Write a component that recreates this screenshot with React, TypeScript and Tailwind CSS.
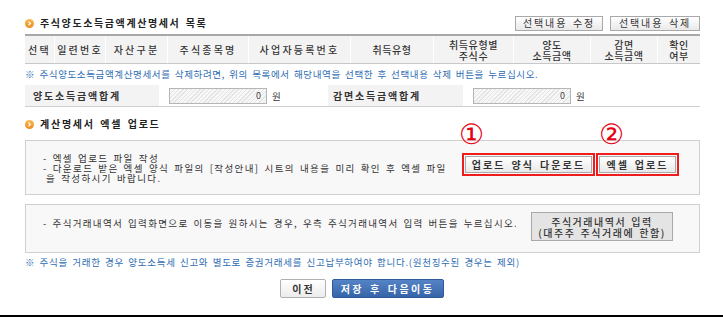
import React from "react";

const font = "font-['Noto_Sans_CJK_KR','Noto_Sans',sans-serif]";

function Bullet() {
  return (
    <svg width="9" height="9" viewBox="0 0 9 9" className="flex-none">
      <defs>
        <linearGradient id="og" x1="0" y1="0" x2="0" y2="1">
          <stop offset="0" stopColor="#fbb955" />
          <stop offset="1" stopColor="#ee8a16" />
        </linearGradient>
      </defs>
      <circle cx="4.5" cy="4.5" r="4.5" fill="url(#og)" />
      <polyline points="3.5,2.6 5.4,4.5 3.5,6.4" fill="none" stroke="#fff" strokeWidth="1.3" />
    </svg>
  );
}

const cols: { w: number; label: string[]; wide: boolean }[] = [
  { w: 29, label: ["선택"], wide: true },
  { w: 51, label: ["일련번호"], wide: true },
  { w: 62, label: ["자산구분"], wide: true },
  { w: 81, label: ["주식종목명"], wide: true },
  { w: 102, label: ["사업자등록번호"], wide: true },
  { w: 83, label: ["취득유형"], wide: false },
  { w: 80, label: ["취득유형별", "주식수"], wide: false },
  { w: 77, label: ["양도", "소득금액"], wide: false },
  { w: 67, label: ["감면", "소득금액"], wide: false },
  { w: 43, label: ["확인", "여부"], wide: false },
];

function GrayBtn({ children, className = "" }: { children: React.ReactNode; className?: string }) {
  return (
    <div
      className={`flex items-center justify-center border border-[#a9a9a9] bg-gradient-to-b from-[#ffffff] to-[#e9e9e9] text-[#333] ${className}`}
    >
      {children}
    </div>
  );
}

function SumInput() {
  return (
    <div className="w-[98px] h-[16px] border border-[#b5b5b5] bg-[repeating-linear-gradient(135deg,#e4e4e4_0px,#e4e4e4_1px,#f7f7f7_1px,#f7f7f7_3px)] flex items-center justify-end pr-[5px] text-[9px] text-[#444]">
      0
    </div>
  );
}

export default function App() {
  return (
    <div className={`relative w-[723px] h-[317px] bg-white overflow-hidden ${font} text-[9.5px] text-[#333] leading-[10px] [word-spacing:1.5px]`}>
      <div className="pl-[25px] w-[700px] pt-[15px]">
        {/* Title row */}
        <div className="flex items-center h-[16px]">
          <Bullet />
          <div className="ml-[6px] font-bold text-[10px] tracking-[1.6px] text-[#222]">주식양도소득금액계산명세서 목록</div>
          <div className="ml-auto flex gap-[7px]">
            <GrayBtn className="w-[88px] h-[15px] text-[10px] tracking-[1.9px]">선택내용 수정</GrayBtn>
            <GrayBtn className="w-[90px] h-[15px] text-[10px] tracking-[1.9px]">선택내용 삭제</GrayBtn>
          </div>
        </div>

        {/* Table header */}
        <div className="mt-[3px] flex h-[30px] bg-[#f3f3f3] border-t-2 border-t-[#a8a8a8] border-b border-b-[#c8c8c8]">
          {cols.map((c, i) => (
            <div
              key={i}
              style={{ width: c.w }}
              className={`flex flex-col items-center justify-center font-medium text-[10px] leading-[11px] text-[#333] ${c.wide ? "tracking-[2.2px]" : "tracking-[0.6px]"} ${i > 0 ? "border-l border-l-white" : ""}`}
            >
              {c.label.map((l, j) => (
                <div key={j}>{l}</div>
              ))}
            </div>
          ))}
        </div>

        {/* note */}
        <div className="mt-[4px] text-[#2f6db4] tracking-[0.63px] h-[12px] flex items-center whitespace-nowrap">
          ※ 주식양도소득금액계산명세서를 삭제하려면, 위의 목록에서 해당내역을 선택한 후 선택내용 삭제 버튼을 누르십시오.
        </div>

        {/* sums */}
        <div className="mt-[5px] flex h-[22px] border-b border-b-[#cfcfcf]">
          <div className="w-[303px] flex items-center">
            <div className="w-[134px] h-full bg-[#f3f3f3] flex items-center pl-[8px] font-bold text-[10px] tracking-[1.8px] text-[#333]">양도소득금액합계</div>
            <div className="ml-[10px]"><SumInput /></div>
            <div className="ml-[5px]">원</div>
          </div>
          <div className="flex-1 flex items-center">
            <div className="w-[135px] h-full bg-[#f3f3f3] flex items-center pl-[5px] font-bold text-[10px] tracking-[1.8px] text-[#333]">감면소득금액합계</div>
            <div className="ml-[10px]"><SumInput /></div>
            <div className="ml-[5px]">원</div>
          </div>
        </div>

        {/* section 2 title */}
        <div className="mt-[11px] flex items-center h-[12px]">
          <Bullet />
          <div className="ml-[6px] font-bold text-[10px] tracking-[1.75px] text-[#222]">계산명세서 엑셀 업로드</div>
        </div>

        {/* box 1 */}
        <div className="relative mt-[10px] h-[55px] border border-[#d0d0d0] bg-[#f8f8f8] flex items-center pl-[17px]">
          <div className="w-[413px] text-[#333] tracking-[1.4px] whitespace-nowrap">
            <div>- 엑셀 업로드 파일 작성</div>
            <div>- 다운로드 받은 엑셀 양식 파일의 [작성안내] 시트의 내용을 미리 확인 후 엑셀 파일</div>
            <div className="pl-[3px]">을 작성하시기 바랍니다.</div>
          </div>
          <div className="ml-[6px] -mt-[6px] flex gap-[1px]">
            <div className="relative border-2 border-[#ee1c1c] p-[1px]">
              <GrayBtn className="w-[127px] h-[17px] font-bold text-[10px] tracking-[2.1px]">업로드 양식 다운로드</GrayBtn>
              <div className="absolute left-[-5px] top-[-34px] text-[#e60012] text-[28px] leading-[28px] font-['DejaVu_Serif',serif] font-normal tracking-normal">①</div>
            </div>
            <div className="relative border-2 border-[#ee1c1c] p-[1px]">
              <GrayBtn className="w-[77px] h-[17px] font-bold text-[10px] tracking-[2px]">엑셀 업로드</GrayBtn>
              <div className="absolute left-[1px] top-[-34px] text-[#e60012] text-[28px] leading-[28px] font-['DejaVu_Serif',serif] font-normal tracking-normal">②</div>
            </div>
          </div>
        </div>

        {/* box 2 */}
        <div className="mt-[9px] h-[49px] border border-[#d0d0d0] bg-[#f8f8f8] flex items-center pl-[17px]">
          <div className="w-[488px] -mt-[12px] tracking-[1.33px] whitespace-nowrap">- 주식거래내역서 입력화면으로 이동을 원하시는 경우, 우측 주식거래내역서 입력 버튼을 누르십시오.</div>
          <div className="-mt-[4px] w-[142px] h-[29px] flex flex-col items-center justify-center border border-[#a9a9a9] bg-[#e4e4e4] text-[#333] font-medium text-[10px] tracking-[1.5px] leading-[11px]">
            <div>주식거래내역서 입력</div>
            <div>(대주주 주식거래에 한함)</div>
          </div>
        </div>

        {/* note 2 */}
        <div className="mt-[3px] text-[#2f6db4] tracking-[0.72px] h-[12px] flex items-center whitespace-nowrap">
          ※ 주식을 거래한 경우 양도소득세 신고와 별도로 증권거래세를 신고납부하여야 합니다.(원천징수된 경우는 제외)
        </div>

        {/* bottom buttons */}
        <div className="mt-[11px] flex justify-center gap-[6px] pr-[2px]">
          <div className="w-[46px] h-[19px] border border-[#b0b0b0] rounded-[2px] bg-gradient-to-b from-white to-[#ececec] flex items-center justify-center font-bold text-[10px] text-[#333] tracking-[2px] pl-[2px]">
            이전
          </div>
          <div className="w-[112px] h-[19px] border border-[#2d5a98] rounded-[2px] bg-gradient-to-b from-[#5584c6] to-[#3664a8] flex items-center justify-center font-bold text-[10px] text-white tracking-[2.4px]">
            저장 후 다음이동
          </div>
        </div>
      </div>
      <div className="absolute left-0 right-0 bottom-0 h-[2px] bg-black" />
    </div>
  );
}
